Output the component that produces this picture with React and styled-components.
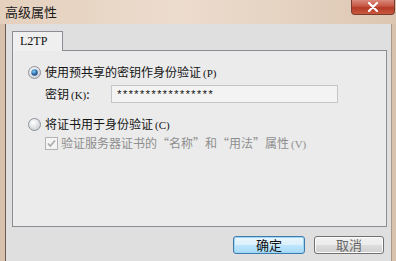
import styled, { createGlobalStyle } from "styled-components";

const GlobalStyle = createGlobalStyle`
  html, body {
    margin: 0;
    padding: 0;
    background: #ffffff;
  }
  body {
    font-family: "Noto Sans CJK SC", "Liberation Sans", sans-serif;
  }
`;

const StyledWindow = styled.div`
  width: 396px;
  height: 261px;
  display: flex;
  flex-direction: column;
  background: #d9c2ad;
  overflow: hidden;
`;

const StyledTitleBar = styled.div`
  height: 24px;
  display: flex;
  justify-content: space-between;
  align-items: flex-start;
  background: linear-gradient(90deg, #e4d0bd 0%, #ecdccd 45%, #e6d4c3 70%, #dcc6b1 100%);
`;

const StyledTitle = styled.div`
  padding: 4px 0 0 5px;
  font-size: 13px;
  line-height: 16px;
  color: #1a1a1a;
`;

const StyledClose = styled.div`
  width: 44px;
  height: 15px;
  margin-right: 1px;
  display: flex;
  align-items: center;
  justify-content: center;
  border: 1px solid #7a3a30;
  border-top: none;
  border-radius: 0 0 4px 4px;
  background: linear-gradient(180deg, #d98a7c 0%, #c65544 45%, #b63a28 55%, #c85a3e 100%);
  box-sizing: border-box;
`;

const StyledBody = styled.div`
  flex: 1;
  display: flex;
  padding: 0 4px 0 5px;
`;

const StyledClient = styled.div`
  flex: 1;
  display: flex;
  flex-direction: column;
  padding: 7px 4px 0 6px;
  background: #dfdfdf;
  border-left: 1px solid #6d5c4d;
  border-right: 1px solid #a8998b;
  box-sizing: border-box;
`;

const StyledTabs = styled.div`
  display: flex;
  height: 19px;
`;

const StyledTab = styled.div`
  width: 51px;
  height: 20px;
  box-sizing: border-box;
  border: 1px solid #8a8d94;
  border-bottom: none;
  background: #efefef;
  font-family: "Liberation Serif", "DejaVu Serif", serif;
  font-size: 12px;
  line-height: 18px;
  padding-left: 7px;
  color: #111;
  position: relative;
  z-index: 1;
`;

const StyledPanel = styled.div`
  height: 177px;
  box-sizing: border-box;
  border: 1px solid #8a8d94;
  background: #ebebeb;
  padding: 13px 0 0 15px;
  display: flex;
  flex-direction: column;
`;

const StyledRow = styled.div`
  display: flex;
  align-items: center;
  height: ${(props) => props.height || 16}px;
  margin-top: ${(props) => props.top || 0}px;
  padding-left: ${(props) => props.indent || 0}px;
`;

const StyledLabel = styled.span`
  font-size: 12px;
  line-height: 16px;
  color: ${(props) => (props.disabled ? "#8e8e8e" : "#141414")};
  margin-left: ${(props) => props.gap || 0}px;
  white-space: nowrap;
  width: ${(props) => (props.width ? props.width + "px" : "auto")};
`;

const StyledKey = styled.span`
  font-family: "Liberation Serif", "DejaVu Serif", serif;
  font-size: 11px;
  margin-left: 2px;
`;

const StyledInput = styled.div`
  width: 227px;
  height: 18px;
  box-sizing: border-box;
  border: 1px solid #c3c5ca;
  background: #f3f3f3;
  font-family: "Liberation Mono", monospace;
  font-size: 11px;
  line-height: 18px;
  letter-spacing: -0.9px;
  padding-left: 4px;
  color: #111;
  overflow: hidden;
`;

const StyledButtons = styled.div`
  display: flex;
  justify-content: flex-end;
  gap: 9px;
  padding: 9px 3px 0 0;
`;

const StyledButton = styled.div`
  width: ${(props) => props.width}px;
  height: 18px;
  box-sizing: border-box;
  border-radius: 3px;
  border: 1px solid ${(props) => (props.primary ? "#3d7bad" : "#707070")};
  background: ${(props) =>
    props.primary
      ? "linear-gradient(180deg, #eaf6fd 0%, #d9f0fc 50%, #bee6fd 51%, #a7d9f5 100%)"
      : "linear-gradient(180deg, #f2f2f2 0%, #ebebeb 50%, #dddddd 51%, #cfcfcf 100%)"};
  box-shadow: ${(props) => (props.primary ? "inset 0 0 0 1px #9fd6f5" : "inset 0 0 0 1px #fbfbfb")};
  font-size: 13px;
  line-height: 16px;
  text-align: center;
  color: ${(props) => (props.faded ? "#666" : "#111")};
`;

const Radio = ({ checked }) => (
  <svg width="13" height="13" viewBox="0 0 13 13">
    <defs>
      <radialGradient id={checked ? "rg1" : "rg0"} cx="0.4" cy="0.35" r="0.7">
        <stop offset="0" stopColor="#ffffff" />
        <stop offset="1" stopColor="#c9ccd2" />
      </radialGradient>
      <radialGradient id="dot" cx="0.4" cy="0.35" r="0.7">
        <stop offset="0" stopColor="#8ad0f5" />
        <stop offset="0.6" stopColor="#2b6fb0" />
        <stop offset="1" stopColor="#1c3f70" />
      </radialGradient>
    </defs>
    <circle cx="6.5" cy="6.5" r="6" fill={`url(#${checked ? "rg1" : "rg0"})`} stroke="#8e9298" strokeWidth="1" />
    {checked && <circle cx="6.5" cy="6.5" r="3.2" fill="url(#dot)" />}
  </svg>
);

const Checkbox = () => (
  <svg width="13" height="13" viewBox="0 0 13 13">
    <rect x="0.5" y="0.5" width="12" height="12" fill="#f4f4f4" stroke="#b3b3b3" />
    <path d="M3 6.5 L5.3 9 L10 3.5" fill="none" stroke="#a9a9a9" strokeWidth="1.6" />
  </svg>
);

const App = () => (
  <>
    <GlobalStyle />
    <StyledWindow>
      <StyledTitleBar>
        <StyledTitle>高级属性</StyledTitle>
        <StyledClose>
          <svg width="12" height="10" viewBox="0 0 12 10">
            <path d="M2 1 L10 9 M10 1 L2 9" stroke="#ffffff" strokeWidth="2.2" strokeLinecap="round" />
          </svg>
        </StyledClose>
      </StyledTitleBar>
      <StyledBody>
        <StyledClient>
          <StyledTabs>
            <StyledTab>L2TP</StyledTab>
          </StyledTabs>
          <StyledPanel>
            <StyledRow>
              <Radio checked />
              <StyledLabel gap={4}>
                使用预共享的密钥作身份验证<StyledKey>(P)</StyledKey>
              </StyledLabel>
            </StyledRow>
            <StyledRow height={18} top={5} indent={17}>
              <StyledLabel width={66}>
                密钥<StyledKey>(K)</StyledKey>:
              </StyledLabel>
              <StyledInput>*****************</StyledInput>
            </StyledRow>
            <StyledRow top={13}>
              <Radio />
              <StyledLabel gap={4}>
                将证书用于身份验证<StyledKey>(C)</StyledKey>
              </StyledLabel>
            </StyledRow>
            <StyledRow top={3} indent={17}>
              <Checkbox />
              <StyledLabel gap={3} disabled>
                验证服务器证书的“名称”和“用法”属性<StyledKey>(V)</StyledKey>
              </StyledLabel>
            </StyledRow>
          </StyledPanel>
          <StyledButtons>
            <StyledButton primary width={72}>确定</StyledButton>
            <StyledButton width={70} faded>取消</StyledButton>
          </StyledButtons>
        </StyledClient>
      </StyledBody>
    </StyledWindow>
  </>
);

export default App;
